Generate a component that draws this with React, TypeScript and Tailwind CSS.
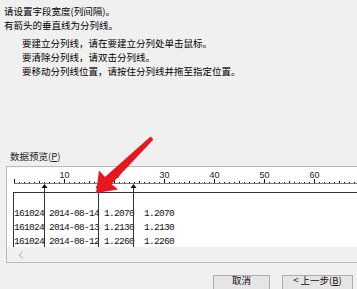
const rows = [
  "161024 2014-08-14 1.2070  1.2070",
  "161024 2014-08-13 1.2130  1.2130",
  "161024 2014-08-12 1.2260  1.2260",
];

// page x of each column break
const breaks = [44, 98, 133];

function Ruler() {
  const ticks = [];
  for (let i = 0; i <= 70; i++) {
    const x = 7.5 + i * 5;
    const h = i % 10 === 0 ? 4 : i % 5 === 0 ? 2 : 1;
    ticks.push(
      <line key={i} x1={x} x2={x} y1={16 - h} y2={16} stroke="#111" strokeWidth={1} />
    );
  }
  return (
    <svg width="360" height="25" className="block">
      <line x1="7" x2="360" y1="16.5" y2="16.5" stroke="#7a7a7a" />
      {ticks}
      {[10, 20, 30, 40, 50, 60].map((n) => (
        <text
          key={n}
          x={7.5 + n * 5}
          y={10.5}
          textAnchor="middle"
          fontSize="9"
          fill="#1a1a1a"
          fontFamily="Liberation Sans, sans-serif"
        >
          {n}
        </text>
      ))}
    </svg>
  );
}

function BreakLine({ x }: { x: number }) {
  return (
    <svg
      width="7"
      height="63"
      className="absolute top-[17px]"
      style={{ left: x - 3 - 7 }}
    >
      <polygon points="3.5,0 6.5,4 0.5,4" fill="#111" />
      <line x1="3.5" x2="3.5" y1="4" y2="63" stroke="#333" />
    </svg>
  );
}

export default function App() {
  return (
    <div className="relative flex h-[289px] w-[357px] flex-col overflow-hidden bg-[#f0f0f0] font-['Noto_Sans_CJK_SC',sans-serif] text-[9.5px] leading-[14px] text-black">
      <div className="h-px bg-[#86b5e5]" />

      <div className="mt-[4px] pl-[4px]">
        <p>请设置字段宽度(列间隔)。</p>
        <p>有箭头的垂直线为分列线。</p>
      </div>
      <div className="mt-[4px] pl-[22px]">
        <p>要建立分列线，请在要建立分列处单击鼠标。</p>
        <p>要清除分列线，请双击分列线。</p>
        <p>要移动分列线位置，请按住分列线并拖至指定位置。</p>
      </div>

      <p className="mt-[71px] pl-[10px] text-[#222]">
        数据预览(<span className="underline">P</span>)
      </p>

      <div className="relative mt-[3px] ml-[6px] border-b border-l border-t border-[#b9b9b9] bg-white">
        <Ruler />
        <div className="ml-[6px] h-[55px] overflow-hidden border-l border-t border-[#333]">
          <div className="pt-[14px] font-['Liberation_Mono',monospace] text-[9.5px] leading-[14px] tracking-[-0.7px] text-[#111]">
            {rows.map((r) => (
              <div key={r} className="whitespace-pre">
                {r}
              </div>
            ))}
          </div>
        </div>
        <div className="flex h-[15px] items-center bg-[#f0f0f0] pl-[11px]">
          <svg width="6" height="8">
            <polyline points="4.5,0.5 1.5,4 4.5,7.5" fill="none" stroke="#a8a8a8" />
          </svg>
        </div>
        {breaks.map((x) => (
          <BreakLine key={x} x={x} />
        ))}
      </div>

      <div className="mt-[12px] flex justify-end gap-[12px] pr-[4px]">
        <button className="flex h-[23px] w-[57px] items-start justify-center border border-[#adadad] bg-[#e5e5e5] text-[9.5px] leading-[9px] text-[#111]">
          取消
        </button>
        <button className="flex h-[23px] w-[71px] items-start justify-center border border-[#adadad] bg-[#e5e5e5] text-[9.5px] leading-[9px] text-[#111]">
          <span>
            &lt; 上一步(<span className="underline">B</span>)
          </span>
        </button>
      </div>

      <svg
        width="357"
        height="289"
        className="pointer-events-none absolute left-0 top-0"
      >
        <polygon
          points="96,193 99,170.5 105,177 150.6,136.6 153.4,139.4 111.5,184 118,189.5"
          fill="#e8171f"
        />
      </svg>
    </div>
  );
}
